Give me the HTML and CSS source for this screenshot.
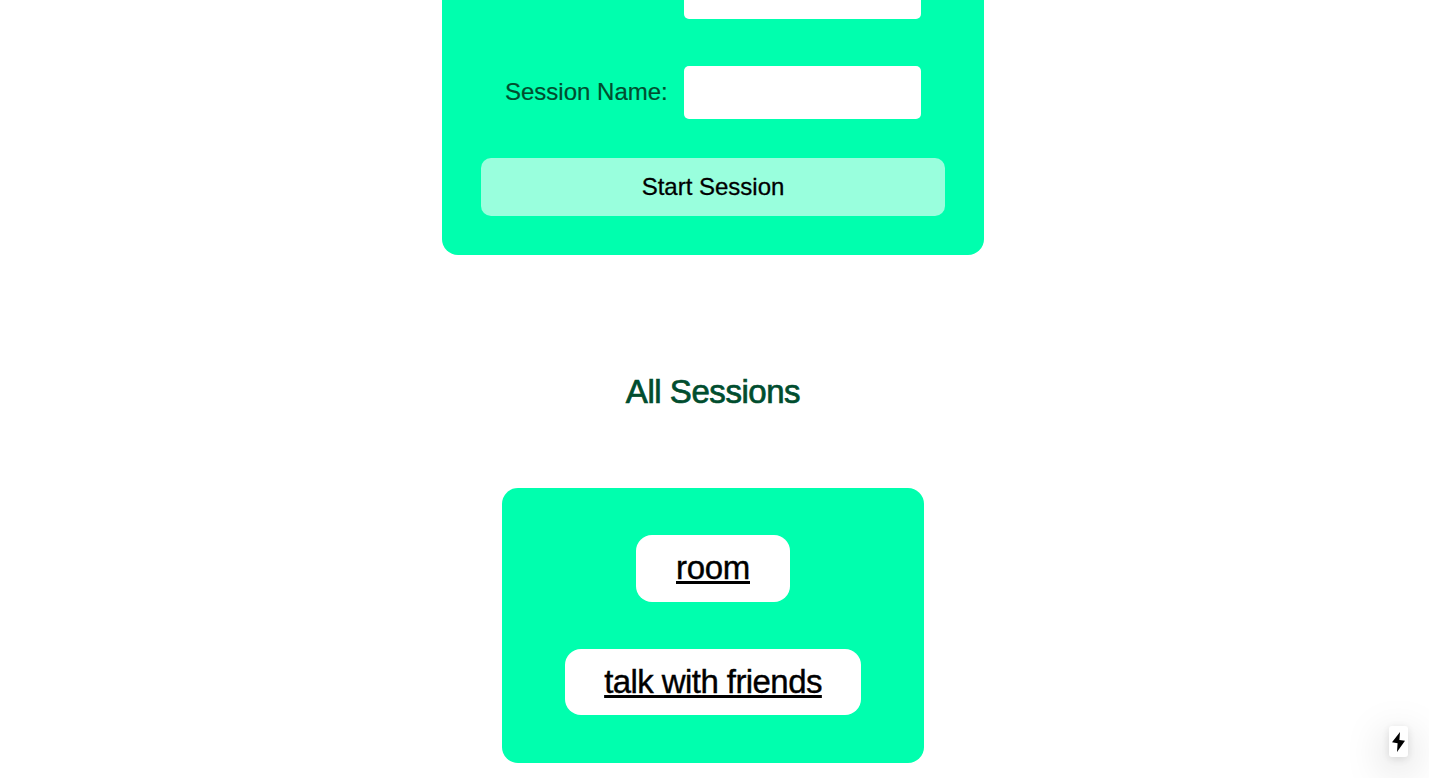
FILE: index.html
```html
<!DOCTYPE html>
<html lang="en">
<head>
<meta charset="utf-8">
<title>Sessions</title>
<link rel="stylesheet" href="styles.css">
</head>
<body>
<main class="page">
  <form class="session-form">
    <div class="field">
      <label class="field-label" for="name">Name:</label>
      <input class="field-input" id="name" type="text" value="room">
    </div>
    <div class="field">
      <label class="field-label" for="session">Session Name:</label>
      <input class="field-input" id="session" type="text">
    </div>
    <button class="start-button" type="button">Start Session</button>
  </form>
  <h2 class="heading">All Sessions</h2>
  <section class="session-list">
    <a class="session-link room" href="#">room</a>
    <a class="session-link friends" href="#">talk with friends</a>
  </section>
</main>
<div class="badge">
  <svg class="bolt" viewBox="0 0 13 20" aria-hidden="true"><path d="M8 0 0 10.2 5.6 11.2 5 20 13 8.8 7.4 8Z"/></svg>
</div>
</body>
</html>
```
FILE: styles.css
```css
* { box-sizing: border-box; }
html, body { height: 100%; overflow: hidden; }
body {
  margin: 0;
  background: #fff;
  color: #000;
  font-family: "Liberation Sans", Arial, sans-serif;
}
.page {
  display: flex;
  flex-direction: column;
  align-items: center;
  width: 1426px;
  margin-top: -73px;
}
.session-form {
  display: flex;
  flex-direction: column;
  width: 542px;
  height: 328px;
  flex: none;
  padding: 39px;
  background: #00ffae;
  border-radius: 16px;
}
.field {
  display: flex;
  align-items: center;
  justify-content: space-between;
  height: 53px;
  flex: none;
  margin-bottom: 47px;
  padding: 0 24px 0 24px;
}
.field + .field { margin-bottom: 39px; }
.field-label {
  padding-bottom: 2px;
  color: #004d2e;
  font-size: 24px;
  line-height: 28px;
  -webkit-text-stroke: 0.2px;
}
.field-input {
  width: 237px;
  height: 53px;
  padding: 0 12px 2px;
  border: 0;
  border-radius: 5px;
  background: #fff;
  font: 24px "Liberation Sans", Arial, sans-serif;
}
.start-button {
  height: 58px;
  flex: none;
  padding: 0;
  border: 0;
  border-radius: 10px;
  background: #99ffdd;
  color: #000;
  font: 24px "Liberation Sans", Arial, sans-serif;
  -webkit-text-stroke: 0.3px;
}
.heading {
  margin: 119px 0 78px;
  color: #004d2e;
  font-size: 33px;
  font-weight: 400;
  letter-spacing: -0.45px;
  line-height: 36px;
  -webkit-text-stroke: 0.7px;
}
.session-list {
  display: flex;
  flex-direction: column;
  align-items: center;
  gap: 47px;
  width: 422px;
  height: 275px;
  flex: none;
  padding-top: 47px;
  background: #00ffae;
  border-radius: 16px;
}
.session-link {
  height: 67px;
  padding: 0 40px;
  border-radius: 16px;
  background: #fff;
  color: #000;
  font-size: 33px;
  line-height: 66px;
  white-space: nowrap;
  text-decoration: underline;
  text-decoration-thickness: 3px;
  text-underline-offset: 2px;
  text-decoration-skip-ink: none;
  -webkit-text-stroke: 0.4px;
}
.room { letter-spacing: -0.3px; }
.friends { height: 66px; padding: 0 39px; letter-spacing: -0.57px; }
.badge {
  position: fixed;
  right: 21px;
  bottom: 21px;
  display: flex;
  align-items: center;
  justify-content: center;
  width: 19px;
  height: 31px;
  border-radius: 3px;
  background: #fff;
  box-shadow: 0 11px 40px rgba(0, 0, 0, 0.25), 0 2px 10px rgba(0, 0, 0, 0.12);
}
.bolt { width: 13px; height: 20px; }
```
